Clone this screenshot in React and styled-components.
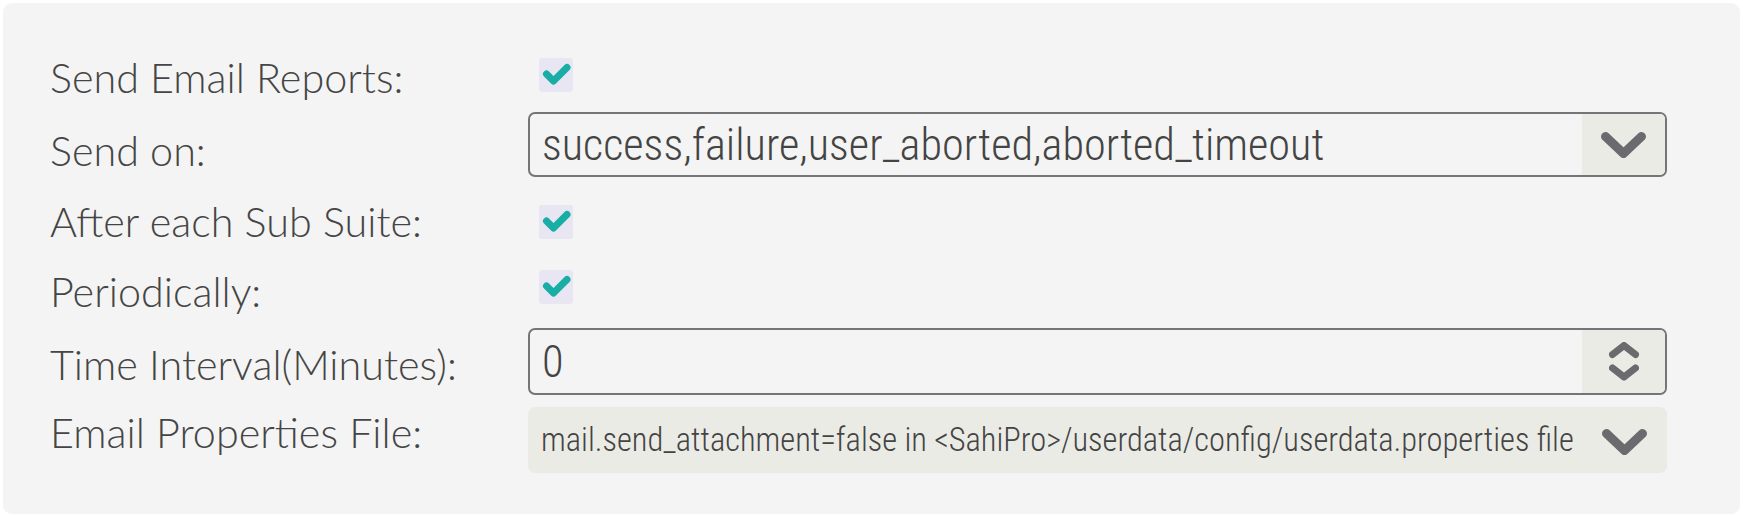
import React from "react";
import styled, { createGlobalStyle } from "styled-components";

const GlobalStyle = createGlobalStyle`
  html, body { margin: 0; padding: 0; background: #ffffff; }
  body { font-family: "Lato", "Roboto", sans-serif; }
`;

const Page = styled.div`
  padding: 3px;
`;

const Panel = styled.section`
  width: 1737px;
  box-sizing: border-box;
  background: #f3f4f3;
  border-radius: 9px;
  padding: 55px 73px 41px 47px;
  display: flex;
  flex-direction: column;
`;

const Row = styled.div`
  display: flex;
  align-items: center;
  height: ${(p) => p.$h}px;
  margin-top: ${(p) => p.$gap || 0}px;
`;

const Label = styled.label`
  flex: 0 0 478px;
  font-family: "Lato", sans-serif;
  font-weight: 300;
  font-size: 41.3px;
  line-height: 1.2;
  color: #454545;
  white-space: nowrap;
  padding-top: ${(p) => (p.$shift > 0 ? p.$shift * 2 : 0)}px;
  padding-bottom: ${(p) => (p.$shift < 0 ? -p.$shift * 2 : 0)}px;
`;

const CheckBox = styled.span`
  display: flex;
  align-items: center;
  justify-content: center;
  width: 34px;
  height: 34px;
  margin-left: 11px;
  border-radius: 3px;
  background: #e8e6f2;
`;

const Field = styled.div`
  flex: 1;
  min-width: 0;
  align-self: stretch;
  display: flex;
  align-items: stretch;
  box-sizing: border-box;
  border: 2px solid #757578;
  border-radius: 7px;
  overflow: hidden;
`;

const FieldText = styled.span`
  flex: 1;
  min-width: 0;
  display: flex;
  align-items: center;
  padding-left: 12px;
  font-family: "Roboto Condensed", "Roboto", sans-serif;
  font-weight: 300;
  font-size: 44.3px;
  color: #444444;
  white-space: nowrap;
`;

const FieldButton = styled.span`
  flex: 0 0 83px;
  display: flex;
  align-items: center;
  justify-content: center;
  background: #ebebe6;
`;

const InfoBox = styled.div`
  flex: 1;
  min-width: 0;
  align-self: stretch;
  display: flex;
  align-items: center;
  border-radius: 7px;
  background: #ebebe6;
`;

const InfoText = styled.span`
  flex: 1;
  min-width: 0;
  padding-left: 13px;
  font-family: "Roboto Condensed", "Roboto", sans-serif;
  font-weight: 300;
  font-size: 32.45px;
  color: #444444;
  white-space: nowrap;
`;

const InfoButton = styled.span`
  flex: 0 0 85px;
  display: flex;
  justify-content: center;
  padding-top: 3px;
`;

const Check = () => (
  <svg width="34" height="34" viewBox="0 0 34 34" aria-hidden="true">
    <polyline points="7.5,16 14.5,23 28,9.5" fill="none" stroke="#18aea6" strokeWidth="7" strokeLinecap="round" strokeLinejoin="round" />
  </svg>
);

const ChevronDown = () => (
  <svg width="45" height="26" viewBox="0 0 45 26" aria-hidden="true">
    <polyline points="4.5,4.5 22.5,21.5 40.5,4.5" fill="none" stroke="#6b6a6f" strokeWidth="9" strokeLinecap="round" strokeLinejoin="round" />
  </svg>
);

const Spinner = () => (
  <svg width="30" height="39" viewBox="0 0 30 39" aria-hidden="true">
    <polyline points="3.5,12.5 15,3.5 26.5,12.5" fill="none" stroke="#6b6a6f" strokeWidth="7" strokeLinecap="round" strokeLinejoin="round" />
    <polyline points="3.5,26 15,35 26.5,26" fill="none" stroke="#6b6a6f" strokeWidth="7" strokeLinecap="round" strokeLinejoin="round" />
  </svg>
);

export default function App() {
  return (
    <Page>
      <GlobalStyle />
      <Panel>
        <Row $h={34}>
          <Label $shift={2.5}>Send Email Reports:</Label>
          <CheckBox><Check /></CheckBox>
        </Row>
        <Row $h={65} $gap={20}>
          <Label $shift={6.5}>Send on:</Label>
          <Field>
            <FieldText>success,failure,user_aborted,aborted_timeout</FieldText>
            <FieldButton><ChevronDown /></FieldButton>
          </Field>
        </Row>
        <Row $h={34} $gap={28}>
          <Label $shift={0}>After each Sub Suite:</Label>
          <CheckBox><Check /></CheckBox>
        </Row>
        <Row $h={34} $gap={31}>
          <Label $shift={5}>Periodically:</Label>
          <CheckBox><Check /></CheckBox>
        </Row>
        <Row $h={67} $gap={24}>
          <Label $shift={3}>Time Interval(Minutes):</Label>
          <Field>
            <FieldText>0</FieldText>
            <FieldButton><Spinner /></FieldButton>
          </Field>
        </Row>
        <Row $h={66} $gap={12}>
          <Label $shift={-7}>Email Properties File:</Label>
          <InfoBox>
            <InfoText>mail.send_attachment=false in &lt;SahiPro&gt;/userdata/config/userdata.properties file</InfoText>
            <InfoButton><ChevronDown /></InfoButton>
          </InfoBox>
        </Row>
      </Panel>
    </Page>
  );
}
